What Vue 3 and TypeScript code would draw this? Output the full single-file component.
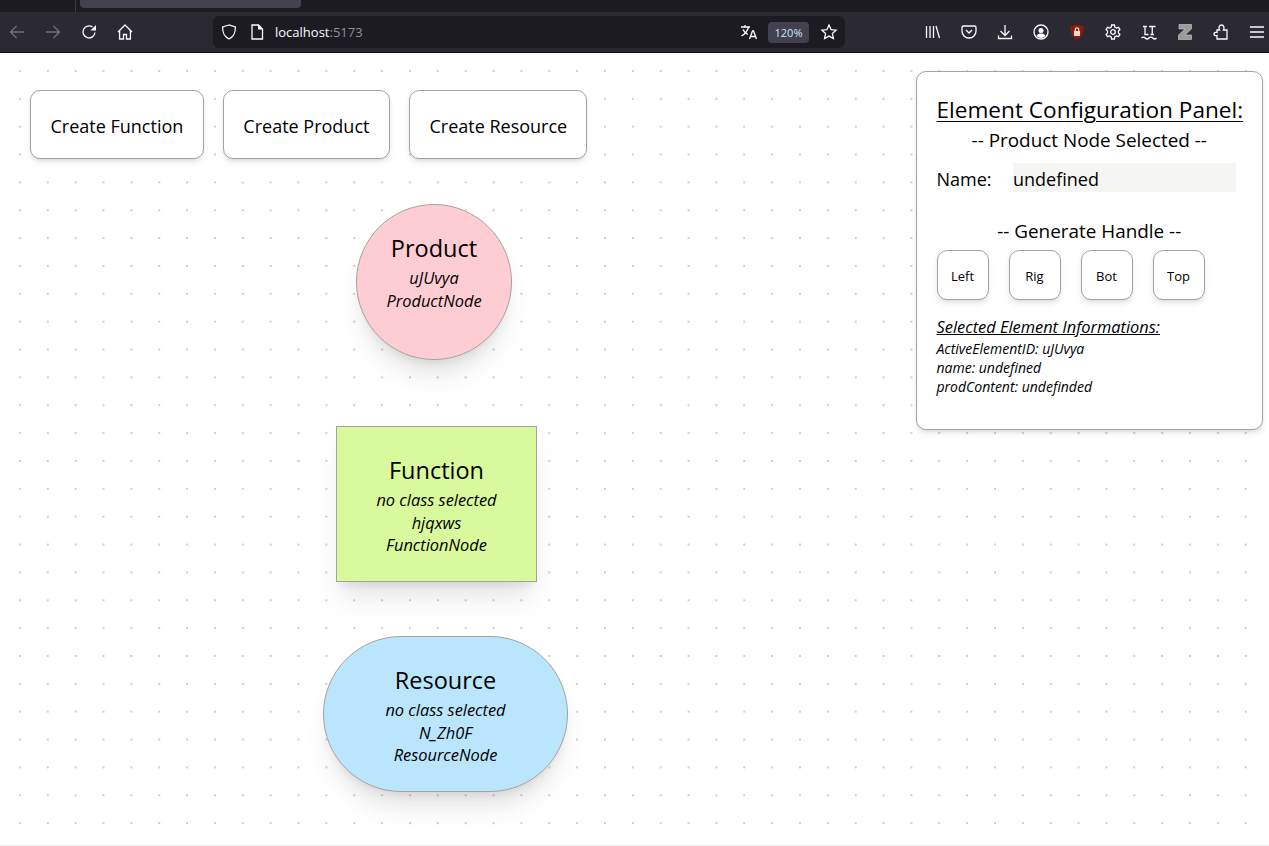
<script setup lang="ts">
import { ref } from 'vue'

interface FlowNode {
    id: string
    title: string
    type: string
    shape: string
    subclass?: string
}

const nodes: FlowNode[] = [
    { id: 'uJUvya', title: 'Product', type: 'ProductNode', shape: 'product' },
    { id: 'hjqxws', title: 'Function', type: 'FunctionNode', shape: 'function', subclass: 'no class selected' },
    { id: 'N_Zh0F', title: 'Resource', type: 'ResourceNode', shape: 'resource', subclass: 'no class selected' }
]

const createLabels = ['Create Function', 'Create Product', 'Create Resource']
const handleLabels = ['Left', 'Rig', 'Bot', 'Top']
const nodeName = ref('undefined')
</script>

<template>
    <div class="browser">
        <div class="tabstrip">
            <div class="tab-sep"></div>
            <div class="tab"></div>
        </div>
        <div class="toolbar">
            <div class="tools">
                <svg class="ico dim" viewBox="0 0 16 16"><path d="M15 8H1.500M7.500 2 1.500 8l6 6" /></svg>
                <svg class="ico dim" viewBox="0 0 16 16"><path d="M1 8h13.500M8.500 2l6 6-6 6" /></svg>
                <svg class="ico" viewBox="0 0 16 16"><path d="M14 8.500A6 6 0 1 1 11.500 3" /><path class="fill" d="M15 1v5.500H9.500z" /></svg>
                <svg class="ico" viewBox="0 0 16 16"><path d="M1 8 8 1l7 7M2.600 6.600V15h3.900v-4.500h3V15h3.900V6.600" /></svg>
            </div>
            <div class="urlbar">
                <svg class="ico shield" viewBox="0 0 16 16"><path d="M8 1 1.600 3c0 6 1.200 9.500 6.400 12 5.200-2.500 6.400-6 6.400-12z" /></svg>
                <svg class="ico page" viewBox="0 0 16 16"><path d="M3 1h6.500L13.500 5v10H3z" /><path class="fill" d="M9 1l4.500 4.500H9z" /></svg>
                <span class="url">localhost<span class="port">:5173</span></span>
                <svg class="ico translate" viewBox="0 0 18 16"><path d="M1 3h9M5 1v2M8.500 3C7.500 7 5 10 1.500 12M3 5.500c1 2.500 3 4 5 5" /><path d="M9.500 15l3-8h1l3 8M10.500 12.500h5" /></svg>
                <span class="zoom">120%</span>
                <svg class="ico star" viewBox="0 0 16 16"><path d="M8 1l2.100 4.600 5 .6-3.700 3.400 1 4.900L8 12.100l-4.400 2.400 1-4.900L.900 6.200l5-.6z" /></svg>
            </div>
            <div class="tools right">
                <svg class="ico" viewBox="0 0 16 16"><path d="M1.500 2v12M5 2v12M8.500 2v12M11 2l3.500 12" /></svg>
                <svg class="ico" viewBox="0 0 16 16"><path d="M2.500 2h11A1.500 1.500 0 0 1 15 3.500V7a7 7 0 0 1-14 0V3.500A1.500 1.500 0 0 1 2.500 2zM5 6l3 3 3-3" /></svg>
                <svg class="ico" viewBox="0 0 16 16"><path d="M8 1v10M3.500 7 8 11.500 12.500 7M1.500 11.500v3h13v-3" /></svg>
                <svg class="ico" viewBox="0 0 16 16"><circle cx="8" cy="8" r="7" /><circle class="fill" cx="8" cy="6.500" r="2.500" /><path class="fill" d="M3.500 12c1-2 2.500-2.500 4.500-2.500s3.500.5 4.500 2.500c-2.500 2.500-6.500 2.500-9 0z" /></svg>
                <svg class="ico badge" viewBox="0 0 16 16"><path class="red" d="M8 .5 1.500 2.500c0 6.500 1.200 10.500 6.500 13 5.300-2.500 6.500-6.500 6.500-13z" /><rect class="cream" x="5" y="7" width="6" height="5" /><path class="lock" d="M6.300 7V5.500a1.700 1.700 0 0 1 3.400 0V7" /></svg>
                <svg class="ico" viewBox="0 0 16 16"><circle cx="8" cy="8" r="2.300" /><path d="M6.600 1h2.800l.4 2 1.700 1 2-.7 1.400 2.400-1.500 1.400v1.800l1.500 1.400-1.400 2.400-2-.7-1.700 1-.4 2H6.600l-.4-2-1.700-1-2 .7L1.100 10.300l1.500-1.400V7.100L1.100 5.700l1.400-2.400 2 .7 1.700-1z" /></svg>
                <svg class="ico" viewBox="0 0 16 16"><path d="M2 2.500h4M4 2.500v8h3.500M8 2.500h6.500M11.250 2.500v8M9.500 10.500h3.500M.5 14c1.200-1.300 2.500-1.300 3.700 0s2.500 1.300 3.800 0 2.500-1.300 3.800 0 2.500 1.300 3.700 0" /></svg>
                <svg class="ico zed" viewBox="0 0 16 16"><path class="grey" d="M2 .5h12.500v4.500L8 11h6.500v4.500H1.500V11L8 5H2z" /></svg>
                <svg class="ico" viewBox="0 0 16 16"><path d="M4 15H14V6H10.500C11.500 4 11 1 8.500 1S5.500 4 6.500 6H4V8.500C2 7.800 1 9 1 10s1 2.200 3 1.500z" /></svg>
                <svg class="ico" viewBox="0 0 16 16"><path d="M1 3h14M1 8h14M1 13h14" /></svg>
            </div>
        </div>

        <div class="canvas">
            <div class="create-row">
                <button v-for="label in createLabels" :key="label" class="create-btn">{{ label }}</button>
            </div>

            <div v-for="node in nodes" :key="node.id" class="node" :class="node.shape">
                <div class="node-title">{{ node.title }}</div>
                <div v-if="node.subclass" class="node-line">{{ node.subclass }}</div>
                <div class="node-line">{{ node.id }}</div>
                <div class="node-line">{{ node.type }}</div>
            </div>

            <aside class="panel">
                <h1 class="panel-title">Element Configuration Panel:</h1>
                <div class="panel-sub">-- Product Node Selected --</div>
                <div class="name-row">
                    <label for="node-name">Name:</label>
                    <input id="node-name" v-model="nodeName" class="name-input" type="text" />
                </div>
                <div class="panel-sub handle-head">-- Generate Handle --</div>
                <div class="handle-row">
                    <button v-for="label in handleLabels" :key="label" class="handle-btn">{{ label }}</button>
                </div>
                <div class="info-title">Selected Element Informations:</div>
                <div class="info-line">ActiveElementID: uJUvya</div>
                <div class="info-line">name: undefined</div>
                <div class="info-line">prodContent: undefinded</div>
            </aside>
        </div>
    </div>
</template>

<style scoped>
.browser {
    display: flex;
    flex-direction: column;
    height: 846px;
    overflow: hidden;
    font-family: "Open Sans", "Noto Sans", sans-serif;
    color: #000;
}

.tabstrip {
    display: flex;
    height: 12px;
    flex: none;
    background: #1c1b22;
}

.tab-sep {
    width: 1px;
    height: 12px;
    margin-left: 75px;
    background: #3a3944;
}

.tab {
    width: 221px;
    height: 8px;
    margin-left: 4px;
    border-radius: 0 0 4px 4px;
    background: #42414d;
}

.toolbar {
    display: flex;
    align-items: center;
    height: 40px;
    flex: none;
    padding: 0 3px 0 8px;
    box-sizing: content-box;
    background: #2b2a33;
    border-bottom: 1px solid #0c0c0d;
}

.tools {
    display: flex;
    align-items: center;
    gap: 18px;
}

.tools.right {
    margin-left: auto;
}

.ico {
    width: 18px;
    height: 16px;
    flex: none;
    fill: none;
    stroke: #fbfbfe;
    stroke-width: 1.3;
    overflow: visible;
}

.ico.dim {
    stroke: #6f7278;
}

.ico .fill {
    fill: #fbfbfe;
    stroke: none;
}

.ico .red {
    fill: #8f1a10;
    stroke: none;
}

.ico .cream {
    fill: #f2d9cf;
    stroke: none;
}

.ico .lock {
    stroke: #f2d9cf;
}

.ico .grey {
    fill: #9c9c9c;
    stroke: #bdbdbd;
    stroke-width: 0.7;
}

.urlbar {
    display: flex;
    align-items: center;
    width: 632px;
    height: 32px;
    margin-left: 79px;
    border-radius: 6px;
    background: #1c1b22;
    color: #fbfbfe;
}

.shield {
    margin-left: 7px;
}

.page {
    margin-left: 10px;
}

.url {
    margin-left: 9px;
    font-size: 13px;
}

.port {
    color: #8f8f9d;
}

.translate {
    margin-left: auto;
}

.zoom {
    width: 41px;
    height: 21px;
    margin-left: 10px;
    border-radius: 4px;
    background: #42414d;
    font-size: 11px;
    line-height: 21px;
    text-align: center;
    color: #cfe5ff;
}

.star {
    margin: 0 7px 0 11px;
}

.canvas {
    position: relative;
    flex: 1;
    background-color: #fff;
    background-image: radial-gradient(circle, #cfcfcf 0.9px, transparent 1.2px);
    background-size: 27.87px 27.87px;
    background-position: 6px 4px;
    border-bottom: 1px solid #ececec;
}

.create-row {
    display: flex;
    gap: 19px;
    padding: 37px 0 0 30px;
}

.create-btn {
    height: 69px;
    padding: 2px 19.500px 0;
    border: 1px solid #a8a29e;
    border-radius: 10px;
    background: #fff;
    font-family: inherit;
    font-size: 18px;
    color: #000;
    box-shadow: 0 4px 6px -1px rgba(0, 0, 0, 0.1), 0 2px 4px -2px rgba(0, 0, 0, 0.1);
}

.create-btn:last-child {
    padding-right: 19px;
}

.node {
    position: absolute;
    box-sizing: border-box;
    border: 1px solid #a8a29e;
    text-align: center;
    box-shadow: 0 20px 25px -5px rgba(0, 0, 0, 0.1), 0 8px 10px -6px rgba(0, 0, 0, 0.1);
}

.node.product {
    left: 356px;
    top: 151px;
    width: 156px;
    height: 156px;
    padding-top: 25px;
    border-radius: 50%;
    background: #fecdd3;
}

.node.function {
    left: 336px;
    top: 373px;
    width: 201px;
    height: 156px;
    padding-top: 25px;
    background: #d9f99d;
}

.node.resource {
    left: 323px;
    top: 583px;
    width: 245px;
    height: 156px;
    padding-top: 25px;
    border-radius: 78px;
    background: #bae6fd;
}

.node-title {
    height: 37px;
    font-size: 23.500px;
    line-height: 36px;
}

.node-line {
    font-size: 16.400px;
    font-style: italic;
    line-height: 22.500px;
}

.panel {
    position: absolute;
    top: 18px;
    left: 916px;
    width: 347px;
    height: 359px;
    box-sizing: border-box;
    padding: 21px 20px 0 19.500px;
    border: 1px solid #a8a29e;
    border-radius: 10px;
    background: #fff;
    box-shadow: 0 4px 6px -1px rgba(0, 0, 0, 0.1), 0 2px 4px -2px rgba(0, 0, 0, 0.1);
}

.panel-title {
    margin: 0;
    font-size: 22.600px;
    font-weight: 400;
    line-height: 34px;
    white-space: nowrap;
    text-decoration: underline;
    text-underline-offset: 3px;
    text-decoration-thickness: 1px;
}

.panel-sub {
    font-size: 18.900px;
    line-height: 26px;
    text-align: center;
}

.name-row {
    display: flex;
    align-items: center;
    margin-top: 10px;
    font-size: 18px;
}

.name-row label {
    width: 76.500px;
    flex: none;
    padding-top: 2px;
}

.name-input {
    width: 223px;
    height: 29px;
    box-sizing: border-box;
    padding: 2px 0 0;
    border: none;
    background: #f5f5f4;
    font-family: inherit;
    font-size: 18px;
    color: #000;
}

.handle-head {
    margin-top: 26px;
}

.handle-row {
    display: flex;
    gap: 20px;
    margin-top: 6px;
}

.handle-btn {
    width: 52px;
    height: 50px;
    padding: 2px 0 0;
    border: 1px solid #a8a29e;
    border-radius: 10px;
    background: #fff;
    font-family: inherit;
    font-size: 13px;
    color: #000;
    box-shadow: 0 4px 6px -1px rgba(0, 0, 0, 0.1), 0 2px 4px -2px rgba(0, 0, 0, 0.1);
}

.info-title {
    height: 23px;
    margin-top: 16px;
    font-size: 16.400px;
    font-style: italic;
    line-height: 22px;
    text-decoration: underline;
}

.info-line {
    font-size: 14px;
    font-style: italic;
    line-height: 19px;
}
</style>
